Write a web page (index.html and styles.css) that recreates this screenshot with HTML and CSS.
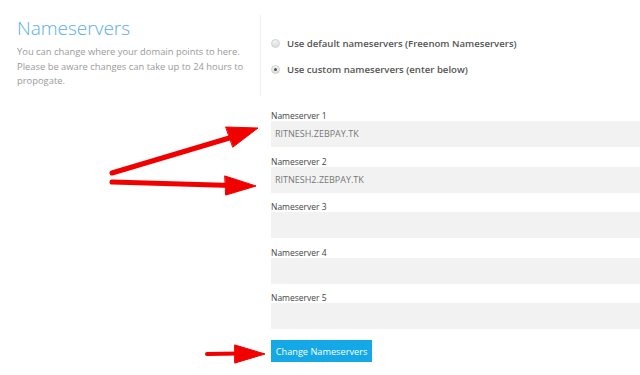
FILE: index.html
```html
<!DOCTYPE html>
<html lang="en">
<head>
  <meta charset="UTF-8" />
  <title>Nameservers</title>
  <link rel="stylesheet" href="styles.css">
</head>
<body>

  <div class="page">

    <!-- Top: intro + choice -->
    <div class="top">
      <div class="intro">
        <h1 class="title">Nameservers</h1>
        <p class="desc">You can change where your domain points to here. Please be aware changes can take up to 24 hours to propogate.</p>
      </div>
      <div class="choices">
        <label class="choice"><span class="radio"></span>Use default nameservers (Freenom Nameservers)</label>
        <label class="choice"><span class="radio checked"></span>Use custom nameservers (enter below)</label>
      </div>
    </div>

    <!-- Nameserver fields -->
    <form class="fields">
      <div class="field">
        <label>Nameserver 1</label>
        <div class="input">RITNESH.ZEBPAY.TK</div>
      </div>
      <div class="field">
        <label>Nameserver 2</label>
        <div class="input">RITNESH2.ZEBPAY.TK</div>
      </div>
      <div class="field">
        <label>Nameserver 3</label>
        <div class="input"></div>
      </div>
      <div class="field">
        <label>Nameserver 4</label>
        <div class="input"></div>
      </div>
      <div class="field">
        <label>Nameserver 5</label>
        <div class="input"></div>
      </div>
      <button type="button" class="btn">Change Nameservers</button>
    </form>

    <!-- red annotation arrows -->
    <svg class="arrows" width="640" height="375" viewBox="0 0 640 375">
      <g fill="#f20000" stroke="#f20000" stroke-linecap="round">
        <line x1="112" y1="173" x2="236" y2="136" stroke-width="5" />
        <polygon points="226,127 258,128 233,147" stroke-width="1" />
        <line x1="112" y1="182" x2="232" y2="185.5" stroke-width="5" />
        <polygon points="225,176 256,186 226,195" stroke-width="1" />
        <line x1="207" y1="354" x2="240" y2="353.5" stroke-width="4" />
        <polygon points="235,345 265,354 235,363" stroke-width="1" />
      </g>
    </svg>

  </div>

</body>
</html>
```

FILE: styles.css
```css
body {
  margin: 0;
  font-family: 'Open Sans', 'Liberation Sans', sans-serif;
  background: #fff;
  overflow: hidden;
}

.page {
  position: relative;
  width: 640px;
  height: 375px;
}

.top {
  display: flex;
  padding-top: 15px;
}

.intro {
  width: 236px;
  height: 81px;
  padding-left: 17px;
  padding-right: 7px;
  border-right: 1px solid #f0f0f0;
}

.title {
  margin: 0;
  font-size: 19px;
  line-height: 26px;
  font-weight: 300;
  color: #5aaee9;
}

.desc {
  margin: 4px 0 0;
  font-size: 9.4px;
  line-height: 14.5px;
  color: #9a9a9a;
}

.choices {
  display: flex;
  flex-direction: column;
  gap: 12px;
  padding-top: 21px;
  padding-left: 10px;
}

.choice {
  display: flex;
  align-items: center;
  height: 14px;
  font-size: 9.6px;
  font-weight: 600;
  color: #555;
}

.radio {
  width: 7px;
  height: 7px;
  border: 1px solid #d0d0d0;
  border-radius: 50%;
  background: linear-gradient(#f4f4f4, #dcdcdc);
  margin-right: 7px;
  position: relative;
}

.radio.checked::after {
  content: '';
  position: absolute;
  left: 2px;
  top: 2px;
  width: 3px;
  height: 3px;
  border-radius: 50%;
  background: #555;
}

.fields {
  margin: 14px 0 0 271px;
  display: flex;
  flex-direction: column;
}

.field {
  margin-bottom: 8.5px;
}

.field label {
  display: block;
  font-size: 8.5px;
  line-height: 11px;
  color: #444;
}

.input {
  height: 26px;
  line-height: 26px;
  padding-left: 4px;
  background: #f2f2f2;
  font-size: 9px;
  color: #777;
}

.btn {
  align-self: flex-start;
  margin-top: 2.5px;
  width: 101px;
  height: 22px;
  padding: 0;
  border: none;
  background: #14a8e6;
  color: #fff;
  font-family: inherit;
  font-size: 9.2px;
}

.arrows {
  position: absolute;
  left: 0;
  top: 0;
  pointer-events: none;
}
```
